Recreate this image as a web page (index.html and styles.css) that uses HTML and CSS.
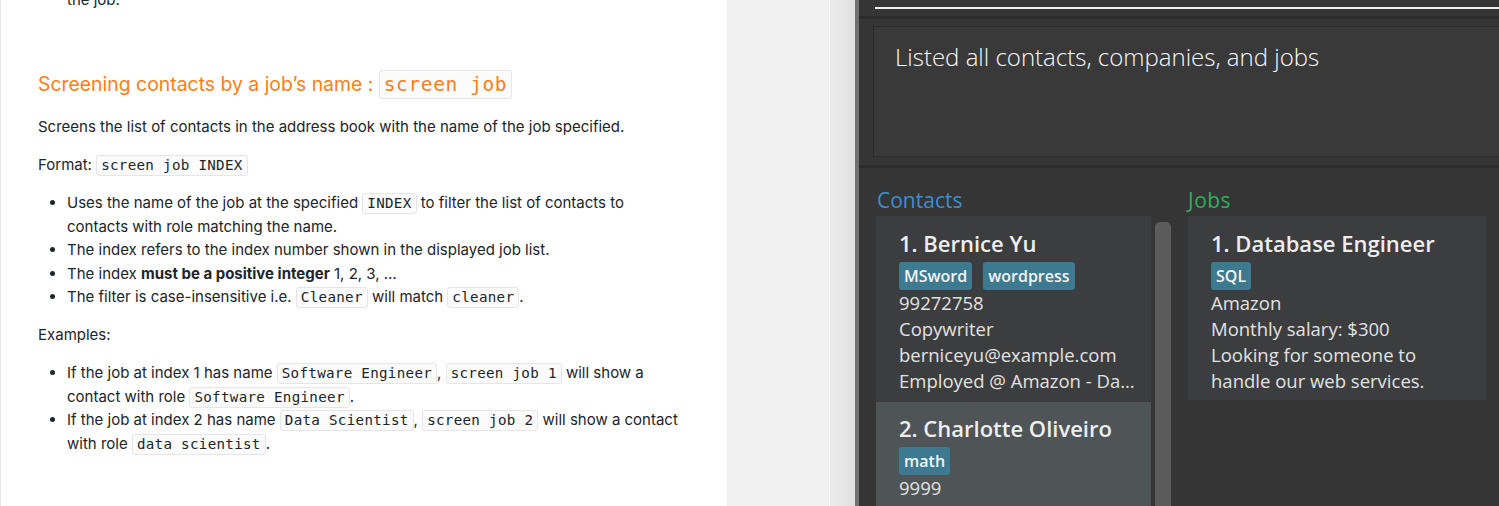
FILE: index.html
```html
<!DOCTYPE html>
<html lang="en">
<head>
<meta charset="utf-8">
<title>Screen job</title>
<link rel="stylesheet" href="styles.css">
</head>
<body>
<div class="page">
  <main class="doc">
    <ul class="list cont-list"><li class="cont">the job.</li></ul>
    <h3 class="doc-h">Screening contacts by a job’s name : <code class="hcode">screen job</code></h3>
    <p class="para">Screens the list of contacts in the address book with the name of the job specified.</p>
    <p class="para">Format: <code>screen job INDEX</code></p>
    <ul class="list">
      <li>Uses the name of the job at the specified <code>INDEX</code> to filter the list of contacts to contacts with role matching the name.</li>
      <li>The index refers to the index number shown in the displayed job list.</li>
      <li>The index <strong>must be a positive integer</strong> 1, 2, 3, …</li>
      <li>The filter is case-insensitive i.e. <code>Cleaner</code> will match <code>cleaner</code>.</li>
    </ul>
    <p class="para">Examples:</p>
    <ul class="list">
      <li>If the job at index 1 has name <code>Software Engineer</code>, <code>screen job 1</code> will show a contact with role <code>Software Engineer</code>.</li>
      <li>If the job at index 2 has name <code>Data Scientist</code>, <code>screen job 2</code> will show a contact with role <code>data scientist</code>.</li>
    </ul>
  </main>
  <div class="gutter">
    <div class="gutter-a"></div>
    <div class="gutter-b"></div>
  </div>
  <section class="app">
    <div class="cmd"><div class="cmd-line"></div></div>
    <div class="result">
      <div class="result-box">Listed all contacts, companies, and jobs</div>
    </div>
    <div class="lists">
      <div class="col col-contacts">
        <div class="col-title contacts-title">Contacts</div>
        <div class="col-body">
          <div class="cards">
            <div class="card">
              <div class="card-name">1. Bernice Yu</div>
              <div class="tags"><span class="tag">MSword</span><span class="tag">wordpress</span></div>
              <div class="line">99272758</div>
              <div class="line">Copywriter</div>
              <div class="line">berniceyu@example.com</div>
              <div class="line">Employed @ Amazon - Database Engineer</div>
            </div>
            <div class="card card-sel">
              <div class="card-name">2. Charlotte Oliveiro</div>
              <div class="tags"><span class="tag">math</span></div>
              <div class="line">9999</div>
            </div>
          </div>
          <div class="scroll"><div class="thumb"></div></div>
        </div>
      </div>
      <div class="col col-jobs">
        <div class="col-title jobs-title">Jobs</div>
        <div class="cards">
          <div class="card job-card">
            <div class="card-name">1. Database Engineer</div>
            <div class="tags"><span class="tag">SQL</span></div>
            <div class="line">Amazon</div>
            <div class="line">Monthly salary: $300</div>
            <div class="line">Looking for someone to</div>
            <div class="line">handle our web services.</div>
          </div>
        </div>
      </div>
    </div>
  </section>
</div>
</body>
</html>
```

FILE: styles.css
```css
* { box-sizing: border-box; }
html, body { margin: 0; padding: 0; }
body { width: 1499px; height: 506px; overflow: hidden; background: #fff; }

.page { display: flex; height: 506px; }

/* ---------- documentation panel ---------- */
.doc {
  width: 727px;
  flex: none;
  height: 506px;
  overflow: hidden;
  background: #fff;
  border-left: 1px solid #e9e9e9;
  padding: 0 38px 0 37px;
  font-family: Inter, "Liberation Sans", sans-serif;
  font-size: 15px;
  line-height: 23.5px;
  color: #212529;
}
.doc > * { max-width: 651px; }
.cont-list { margin-top: -12px !important; }
.cont { list-style: none; }
.doc-h {
  margin: 57px 0 0;
  font-size: 19.4px;
  font-weight: 400;
  line-height: 30px;
  color: #fd7e14;
}
.para { margin: 14.5px 0 0; }
.doc-h + .para { margin-top: 16.5px; }
.list { margin: 14.5px 0 0; padding-left: 29px; }
.list + .para { margin-top: 14.5px; }
.list li { padding-left: 0; }
code {
  font-family: "DejaVu Sans Mono", "Liberation Mono", monospace;
  font-size: 14.2px;
  line-height: 1;
  padding: 1px 4px 2px;
  border: 1px solid #e6e6e6;
  border-radius: 3px;
  background: #fbfbfb;
  color: #212529;
  letter-spacing: 0.3px;
}
.hcode {
  font-size: 19.5px;
  color: #fd7e14;
  padding: 2px 4px;
  letter-spacing: 0.6px;
}
strong { font-weight: 700; }

/* ---------- gutter between windows ---------- */
.gutter { width: 128px; flex: none; display: flex; }
.gutter-a { width: 103px; background: #f0f0f0; border-right: 1px solid #fbfbfb; }
.gutter-b { flex: 1; background: linear-gradient(to right, #ececec, #e0e0e0); }

/* ---------- app window ---------- */
.app {
  flex: 1;
  display: flex;
  flex-direction: column;
  background: #353535;
  border-left: 4px solid #707070;
  font-family: "Open Sans", "Noto Sans", sans-serif;
  overflow: hidden;
}
.cmd { flex: none; height: 19px; padding-left: 16px; border-bottom: 3px solid #2c2c2c; }
.cmd-line { height: 9px; border-bottom: 2px solid #ececec; }
.result { flex: none; padding: 7px 0 8px 14px; border-bottom: 3px solid #2c2c2c; }
.result-box {
  height: 131px;
  background: #393939;
  border: 1px solid #2a2a2a;
  border-right: none;
  padding: 14px 0 0 21px;
  font-size: 24px;
  font-weight: 300;
  line-height: 32px;
  color: #fafafa;
}
.lists { flex: 1; min-height: 0; display: flex; gap: 17px; padding: 0 13px 0 17px; }
.col { display: flex; flex-direction: column; min-height: 0; }
.col-contacts { width: 295px; flex: none; }
.col-jobs { flex: 1; }
.col-title { flex: none; padding: 18px 0 2px 1px; font-size: 21px; line-height: 28px; }
.contacts-title { color: #3a8fd2; }
.jobs-title { color: #2bb05c; padding-left: 0; letter-spacing: 0.5px; }
.col-body { flex: 1; min-height: 0; display: flex; gap: 4px; }
.col-body .cards { width: 275px; flex: none; }
.scroll { width: 16px; padding-top: 6px; }
.thumb { height: 100%; background: #5b5b5b; border-radius: 5px 5px 0 0; }

.card {
  background: #3c3d3f;
  padding: 12px 10px 8px 23px;
  color: #e2e2e2;
}
.card-sel { background: #4f5457; padding-top: 11px; }
.job-card { padding-bottom: 6px; }
.card-name {
  font-size: 22px;
  font-weight: 600;
  line-height: 30px;
  color: #eeeeee;
}
.tags { display: flex; gap: 11px; margin-top: 4px; }
.tag {
  background: #3d7a8f;
  color: #f4f4f4;
  font-size: 16px;
  font-weight: 600;
  line-height: 28px;
  padding: 0 5px;
  border-radius: 3px;
}
.line {
  font-size: 18.5px;
  line-height: 26px;
  white-space: nowrap;
  overflow: hidden;
  text-overflow: ellipsis;
}
```
